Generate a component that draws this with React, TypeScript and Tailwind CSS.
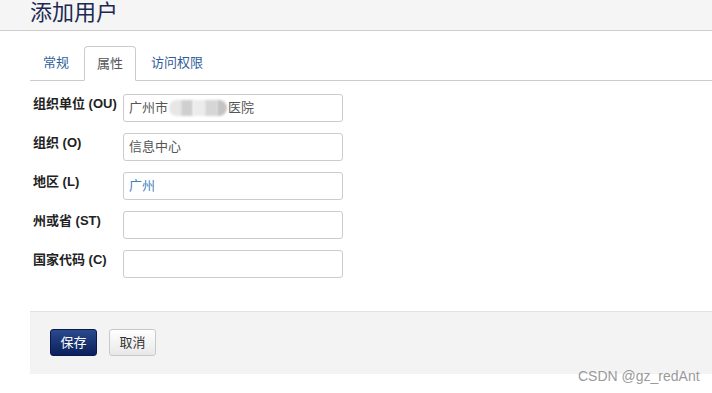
import React from 'react';

const cjk = { fontFamily: '"Liberation Sans", "Noto Sans CJK SC", sans-serif' };

interface FieldProps {
  label: string;
  value?: React.ReactNode;
  valueClass?: string;
}

const Field: React.FC<FieldProps> = ({ label, value, valueClass }) => (
  <div className="flex items-start">
    <label className="w-[90px] pt-[1px] text-[13px] leading-[18px] font-bold text-[#222]">{label}</label>
    <div
      className={`w-[220px] h-[28px] border border-[#ccc] rounded-[3px] bg-white px-[5px] flex items-center text-[13px] ${
        valueClass ?? 'text-[#555]'
      }`}
    >
      {value}
    </div>
  </div>
);

export default function App() {
  return (
    <div className="relative w-[712px] h-[393px] bg-white overflow-hidden" style={cjk}>
      {/* Page title */}
      <div className="h-[32px] bg-[#f5f5f5] border-b border-[#cfcfcf] pl-[30px]">
        <h1 className="text-[22px] leading-[28px] text-[#1c2a52] -mt-[1px]">添加用户</h1>
      </div>

      {/* Tabs */}
      <div className="ml-[30px] mt-[15px] flex items-end border-b border-[#ccc] h-[35px]">
        <div className="px-[13px] h-[34px] flex items-center text-[13px] text-[#2f5e9a] mr-[2px]">常规</div>
        <div className="px-[12px] h-[35px] -mb-[1px] flex items-center text-[13px] text-[#555] bg-white border border-[#ccc] border-b-white rounded-t-[4px]">
          属性
        </div>
        <div className="px-[15px] h-[34px] flex items-center text-[13px] text-[#2f5e9a]">访问权限</div>
      </div>

      {/* Form */}
      <div className="ml-[33px] mt-[13px] flex flex-col gap-[11px]">
        <Field
          label="组织单位 (OU)"
          value={
            <span className="flex items-center">
              广州市
              <span className="flex h-[16px] mx-[1px]">
                <span className="w-[12px] bg-[#e6e6e6] blur-[1px] rounded-l-full" />
                <span className="w-[12px] bg-[#cfcfcf] blur-[1px]" />
                <span className="w-[12px] bg-[#ececec] blur-[1px]" />
                <span className="w-[12px] bg-[#d6d6d6] blur-[1px]" />
                <span className="w-[10px] bg-[#c4c4c4] blur-[1px] rounded-r-full" />
              </span>
              医院
            </span>
          }
        />
        <Field label="组织 (O)" value="信息中心" />
        <Field label="地区 (L)" value="广州" valueClass="text-[#3f7fc0]" />
        <Field label="州或省 (ST)" />
        <Field label="国家代码 (C)" />
      </div>

      {/* Actions */}
      <div className="ml-[30px] mt-[33px] h-[63px] bg-[#f3f3f3] border-t border-[#e2e2e2] pl-[20px] pt-[17px] flex items-start gap-[12px]">
        <button className="w-[47px] h-[27px] rounded-[3px] bg-gradient-to-b from-[#2a4a8e] to-[#0c1f5c] border border-[#0b1a4a] text-white text-[13px]">
          保存
        </button>
        <button className="w-[47px] h-[27px] rounded-[3px] bg-gradient-to-b from-white to-[#e8e8e8] border border-[#c8c8c8] text-[#333] text-[13px]">
          取消
        </button>
      </div>

      {/* Watermark */}
      <div className="absolute left-[578px] top-[366px] text-[14px] text-[#9a9a9a]" style={{ fontFamily: '"Liberation Sans", sans-serif' }}>
        CSDN @gz_redAnt
      </div>
    </div>
  );
}
